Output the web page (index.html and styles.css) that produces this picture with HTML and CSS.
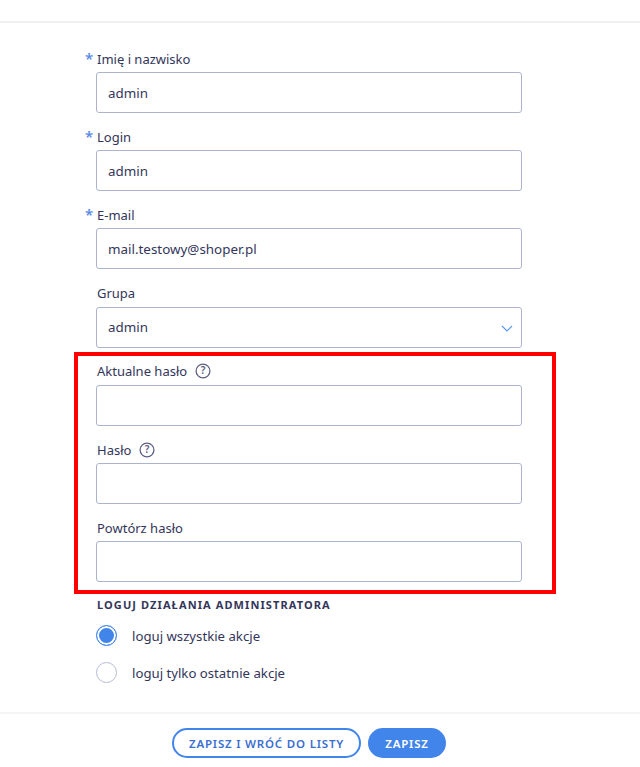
FILE: index.html
```html
<!DOCTYPE html>
<html lang="pl">
<head>
  <meta charset="UTF-8" />
  <meta name="viewport" content="width=device-width, initial-scale=1.0"/>
  <title>Administrator</title>
  <link rel="stylesheet" href="styles.css">
</head>
<body>
  <div class="topbar"></div>

  <form class="form">
    <div class="field required">
      <label class="label">Imię i nazwisko</label>
      <input class="input" type="text" value="admin" />
    </div>
    <div class="field required">
      <label class="label">Login</label>
      <input class="input" type="text" value="admin" />
    </div>
    <div class="field required">
      <label class="label">E-mail</label>
      <input class="input" type="text" value="mail.testowy@shoper.pl" />
    </div>
    <div class="field">
      <label class="label label-tall">Grupa</label>
      <div class="select">
        <span class="select-value">admin</span>
        <svg class="chevron" width="12" height="7" viewBox="0 0 12 7"><path d="M1 1l5 5 5-5" fill="none" stroke="#5b9bf0" stroke-width="1.2"/></svg>
      </div>
    </div>
    <div class="field">
      <label class="label label-up">Aktualne hasło
        <svg class="help" width="16" height="16" viewBox="0 0 16 16"><circle cx="8" cy="8" r="6.9" fill="none" stroke="#5d5f85" stroke-width="1.3"/><text x="8" y="11.4" text-anchor="middle">?</text></svg>
      </label>
      <input class="input" type="password" />
    </div>
    <div class="field">
      <label class="label">Hasło
        <svg class="help" width="16" height="16" viewBox="0 0 16 16"><circle cx="8" cy="8" r="6.9" fill="none" stroke="#5d5f85" stroke-width="1.3"/><text x="8" y="11.4" text-anchor="middle">?</text></svg>
      </label>
      <input class="input" type="password" />
    </div>
    <div class="field">
      <label class="label">Powtórz hasło</label>
      <input class="input" type="password" />
    </div>

    <h3 class="section-title">LOGUJ DZIAŁANIA ADMINISTRATORA</h3>
    <div class="radio-row">
      <span class="radio checked"></span>
      <span>loguj wszystkie akcje</span>
    </div>
    <div class="radio-row">
      <span class="radio"></span>
      <span>loguj tylko ostatnie akcje</span>
    </div>

    <div class="highlight"></div>
  </form>

  <div class="footer">
    <button class="btn btn-outline" type="button">ZAPISZ I WRÓĆ DO LISTY</button>
    <button class="btn btn-primary" type="button">ZAPISZ</button>
  </div>
</body>
</html>
```

FILE: styles.css
```css
* {
  box-sizing: border-box;
}

body {
  margin: 0;
  height: 767px;
  overflow: hidden;
  background-color: #fff;
  color: #33365a;
  font-family: "Noto Sans", sans-serif;
  font-size: 13px;
}

.topbar {
  height: 23px;
  border-bottom: 2px solid #f0f0f0;
}

.form {
  position: relative;
  width: 426px;
  margin-left: 96px;
  padding-top: 26px;
}

.field {
  margin-bottom: 14px;
}

.required {
  position: relative;
}

.required::before {
  content: "*";
  position: absolute;
  left: -11px;
  top: -1px;
  color: #5a8ae8;
  font-size: 15px;
  font-weight: 600;
}

.label {
  display: flex;
  align-items: center;
  gap: 8px;
  height: 20px;
  margin-bottom: 3px;
  padding-left: 1px;
}

.label-tall {
  margin-bottom: 4px;
}

.label-up {
  margin-top: -1px;
  margin-bottom: 4px;
}

.input,
.select {
  display: flex;
  align-items: center;
  justify-content: space-between;
  width: 100%;
  height: 41px;
  padding: 0 11px;
  border: 1px solid #abb4cf;
  border-radius: 3px;
  background: #fff;
  color: #33365a;
  font-family: inherit;
  font-size: 13.4px;
}

.select-value {
  margin-top: -2px;
}

.chevron {
  margin-right: -3px;
  margin-top: 2px;
}

.help text {
  font-size: 10px;
  font-weight: 600;
  fill: #5d5f85;
}

.section-title {
  margin: -1px 0 10px;
  height: 20px;
  padding-left: 1px;
  line-height: 20px;
  font-size: 11px;
  font-weight: 700;
  letter-spacing: 1.1px;
}

.radio-row {
  display: flex;
  align-items: center;
  gap: 15px;
  height: 21px;
  margin-bottom: 16px;
  font-size: 13.2px;
}

.radio {
  width: 21px;
  height: 21px;
  border: 1px solid #b4bcd6;
  border-radius: 50%;
  background: #fff;
}

.radio.checked {
  border-color: #4285ea;
  background: #4285ea;
  box-shadow: inset 0 0 0 2px #fff;
}

.highlight {
  position: absolute;
  left: -22px;
  top: 329px;
  width: 482px;
  height: 242px;
  border: 4px solid #f00;
  pointer-events: none;
}

.footer {
  position: absolute;
  left: 0;
  right: 0;
  top: 712px;
  display: flex;
  justify-content: center;
  gap: 7px;
  padding: 14px 22px 0 0;
  border-top: 2px solid #f5f5f5;
}

.btn {
  height: 30px;
  border-radius: 15px;
  font-family: inherit;
  font-size: 11.5px;
  font-weight: 600;
  letter-spacing: 0.8px;
}

.btn-outline {
  width: 189px;
  padding: 0;
  border: 2px solid #4285ea;
  background: #fff;
  color: #3a6fd0;
}

.btn-primary {
  width: 78px;
  padding: 0;
  border: none;
  background: #4285ea;
  color: #fff;
}
```
